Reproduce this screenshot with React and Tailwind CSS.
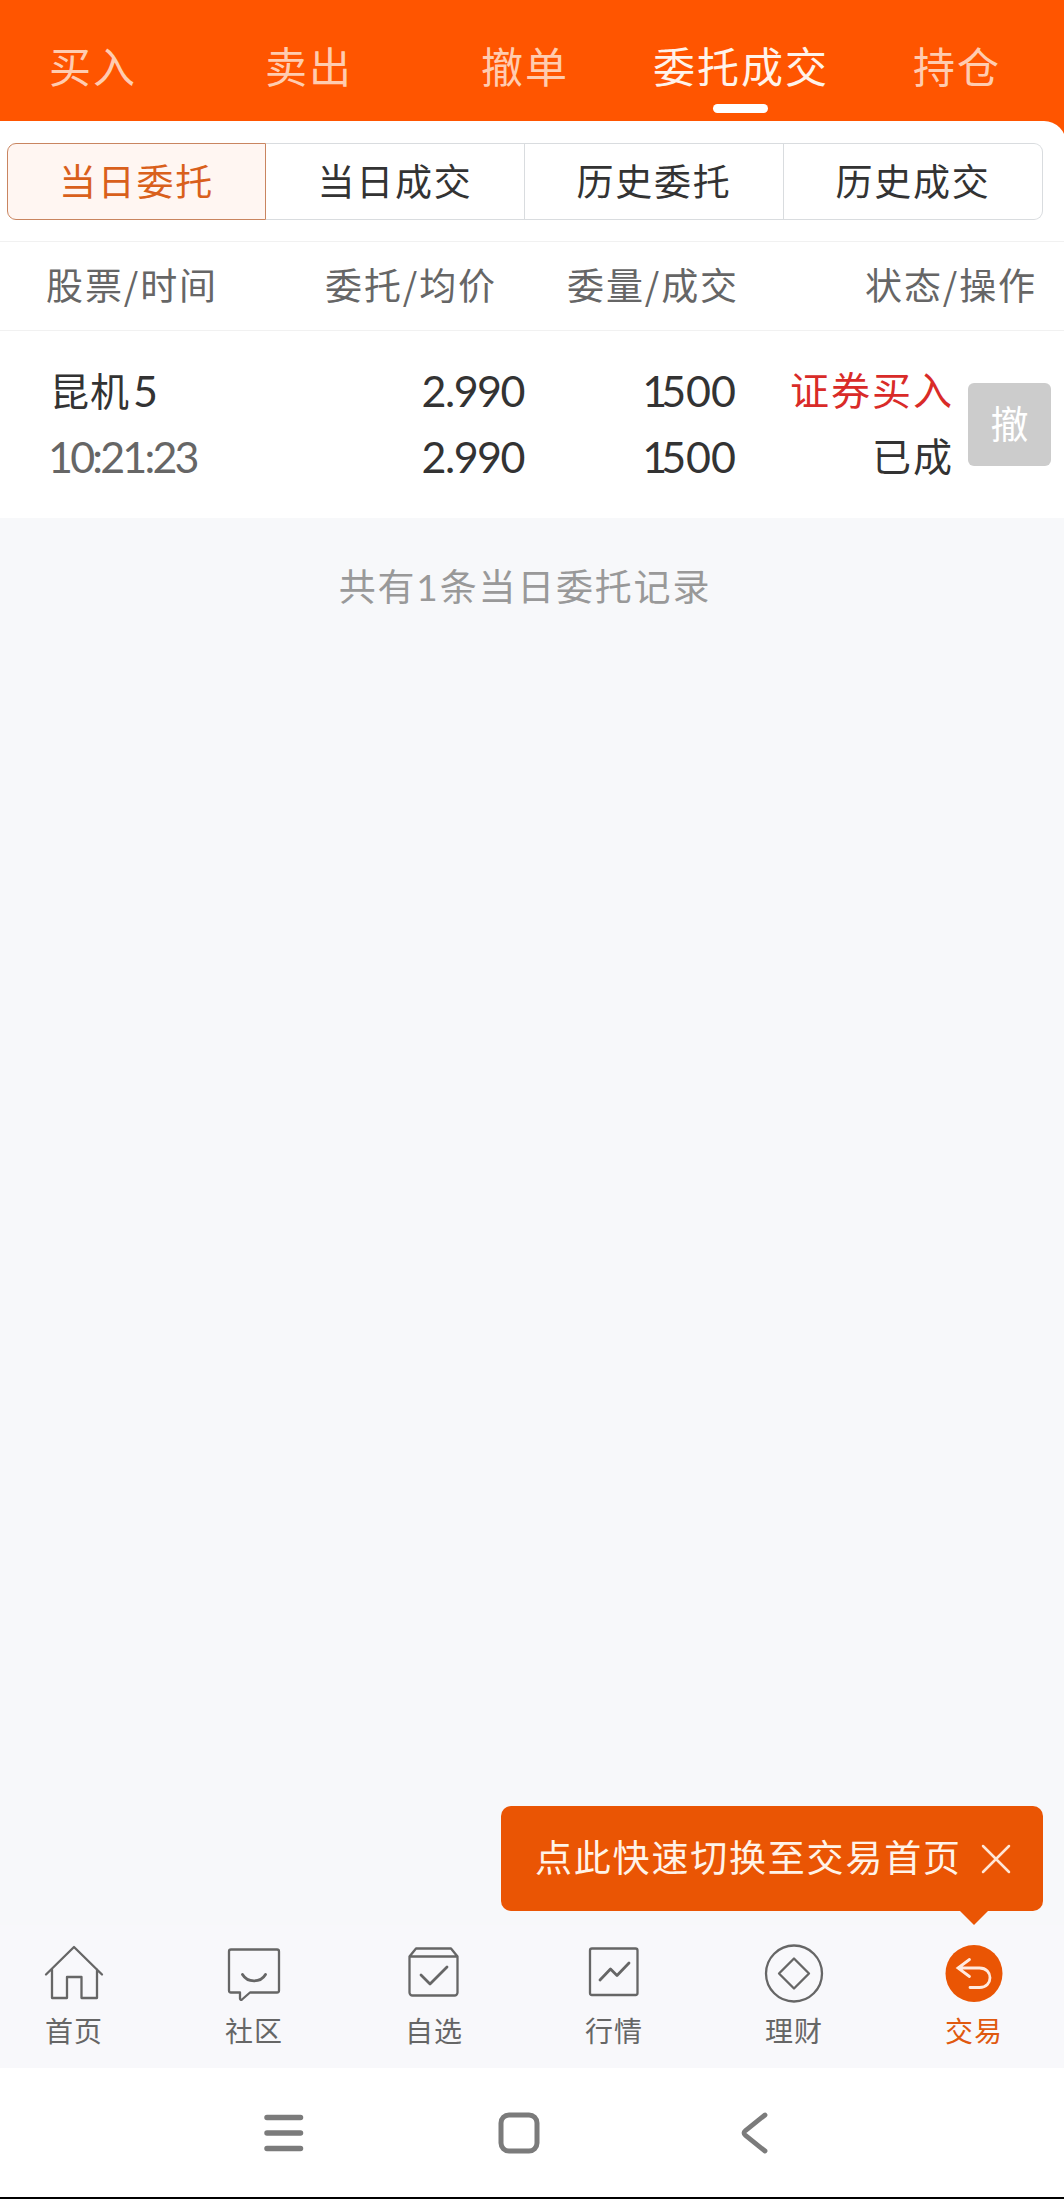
const CJK = "font-['Noto_Sans_CJK_SC',sans-serif]";
const NUM = "font-[Lato,'Noto_Sans_CJK_SC',sans-serif]";

const topTabs = ["买入", "卖出", "撤单", "委托成交", "持仓"];
const segments = ["当日委托", "当日成交", "历史委托", "历史成交"];

const iconProps = {
  width: 60,
  height: 60,
  viewBox: "0 0 60 60",
  fill: "none",
  stroke: "#666666",
  strokeWidth: 2.3,
  strokeLinecap: "round",
  strokeLinejoin: "round",
};

function HomeIcon() {
  return (
    <svg {...iconProps}>
      <path d="M2 30.500 30 3 58 30.500M8 25.500v28.500h15V33h14.500v21H53V25.500" />
    </svg>
  );
}
function CommunityIcon() {
  return (
    <svg {...iconProps}>
      <path d="M7 5.500h46a2 2 0 0 1 2 2v39a2 2 0 0 1-2 2H26l-8 7c-1 .7-2 0-2-1v-6H7a2 2 0 0 1-2-2v-39a2 2 0 0 1 2-2Z" />
      <path d="M18.500 30.500c5 8.500 18 8.500 23 0" strokeWidth="2.800" />
    </svg>
  );
}
function WatchlistIcon() {
  return (
    <svg {...iconProps}>
      <path d="M5.500 12.500 12 4.500h35l6.500 8v36a3 3 0 0 1-3 3h-42a3 3 0 0 1-3-3ZM6 12.500h47" />
      <path d="m17 31 9 9 17-17" strokeWidth="2.800" />
    </svg>
  );
}
function MarketIcon() {
  return (
    <svg {...iconProps}>
      <rect x="6" y="4.500" width="47.500" height="46.500" rx="2" />
      <path d="m16 36 10.500-11 6.500 6.500 12-12.500" strokeWidth="2.800" />
    </svg>
  );
}
function WealthIcon() {
  return (
    <svg {...iconProps}>
      <circle cx="30" cy="29.500" r="28" />
      <path d="M30 14.500 45 29.500 30 44.500 15 29.500Z" />
    </svg>
  );
}
function TradeIcon() {
  return (
    <svg {...iconProps} stroke="#ffeadf" strokeWidth="2.800">
      <circle cx="30" cy="29.500" r="28.500" fill="#ea5504" stroke="none" />
      <path d="M25.500 15.500 14 24l11.500 8.500M14 24h21.500c14 0 14 19.500 0 19.500H26" strokeLinejoin="miter" />
    </svg>
  );
}

const navItems = [
  { label: "首页", Icon: HomeIcon },
  { label: "社区", Icon: CommunityIcon },
  { label: "自选", Icon: WatchlistIcon },
  { label: "行情", Icon: MarketIcon },
  { label: "理财", Icon: WealthIcon },
  { label: "交易", Icon: TradeIcon, active: true },
];

export default function App() {
  return (
    <div className={`flex h-[2199px] w-[1064px] flex-col overflow-hidden bg-[#f7f8fa] text-[#333333] ${CJK}`}>
      <header className="bg-[#ff5500]">
        <nav className="-ml-4 flex h-[121px] w-[1080px]">
          {topTabs.map((t) => {
            const active = t === "委托成交";
            return (
              <div key={t} className="flex w-[216px] flex-col items-center pt-[35px]">
                <span
                  className={`-mr-0.5 text-[42px] leading-[60px] tracking-[2px] whitespace-nowrap ${active ? "text-[#fff3ea]" : "text-[#ffccb0]"}`}
                >
                  {t}
                </span>
                {active && <span className="mt-[9px] h-[9px] w-[55px] rounded-full bg-white" />}
              </div>
            );
          })}
        </nav>
        <div className="-mr-0.5 -ml-5 h-[22px] rounded-t-[22px] bg-white" />
      </header>

      <section className="h-[98px] shrink-0 bg-white pl-[7px]">
        <div className="flex h-[77px] w-[1036px]">
          {segments.map((s, i) => (
            <div
              key={s}
              className={`flex w-[259px] items-center justify-center border pb-[4px] text-[37px] tracking-[1.700px] ${
                i === 0
                  ? "rounded-l-[9px] border-[#c98560] bg-[#fff6f2] text-[#d9601c]"
                  : i === 3
                    ? "rounded-r-[9px] border-l-0 border-[#d9dcdf]"
                    : "border-l-0 border-[#d9dcdf]"
              }`}
            >
              <span className="leading-[54px]">{s}</span>
            </div>
          ))}
        </div>
      </section>

      <section className="flex h-[90px] shrink-0 items-center border-y border-[#f1f1f1] bg-white pr-[29px] pb-[2px] pl-[46px] text-[37px] tracking-[1.900px] text-[#666666]">
        <span className="w-[279px]">股票/时间</span>
        <span className="w-[242px]">委托/均价</span>
        <span>委量/成交</span>
        <span className="-mr-0.5 ml-auto">状态/操作</span>
      </section>

      <section className="flex h-[187px] shrink-0 bg-white pt-[27px] pr-[13px] pl-[48px] text-[39px] leading-[66px]">
        <div className="w-[222px]">
          <div className="flex h-[66px] items-center pl-[2px]">
            <span className="-mt-[4px] tracking-[1px]">昆机</span>
            <span className={`ml-[3px] text-[43px] ${NUM}`}>5</span>
          </div>
          <div className={`h-[66px] text-[43px] tracking-[-2.800px] text-[#666666] ${NUM}`}>10:21:23</div>
        </div>
        <div className={`-mr-px w-[254px] text-right text-[43px] tracking-[-1.500px] ${NUM}`}>
          <div className="h-[66px]">2.990</div>
          <div className="h-[66px]">2.990</div>
        </div>
        <div className={`w-[213px] text-right text-[43px] ${NUM}`}>
          <div className="h-[66px]"><span className="tracking-[-6px]">1</span>500</div>
          <div className="h-[66px]"><span className="tracking-[-6px]">1</span>500</div>
        </div>
        <div className="-mt-[3px] w-[218px] text-right tracking-[2px]">
          <div className="h-[66px] text-[#d92b28]">证券买入</div>
          <div className="h-[66px]">已成</div>
        </div>
        <button className="mt-[25px] ml-auto flex size-[83px] items-center justify-center rounded-[6px] bg-[#cccccc] pb-[5px] text-[38px] text-white">
          撤
        </button>
      </section>

      <p className="mt-[40px] -ml-[14px] text-center text-[37px] leading-[54px] tracking-[1.800px] text-[#999999]">
        共有<span className={NUM}>1</span>条当日委托记录
      </p>

      <div className="mt-auto mr-[21px] flex flex-col items-end">
        <div className="flex h-[105px] w-[542px] items-center rounded-[10px] bg-[#ea5504] pl-[34px] text-[37px] text-[#fff3e8]">
          <span className="-mt-[3px] tracking-[1.800px]">点此快速切换至交易首页</span>
          <svg className="ml-[19px]" width="30" height="30" viewBox="0 0 30 30" stroke="#ffe6d6" strokeWidth="2.500" strokeLinecap="round">
            <path d="M2 2 28 28M28 2 2 28" />
          </svg>
        </div>
        <svg className="mr-[55px]" width="28" height="14" viewBox="0 0 28 14">
          <path d="M0 0h28L14 14Z" fill="#ea5504" />
        </svg>
      </div>

      <nav className="-ml-4 flex h-[143px] w-[1080px] shrink-0 bg-[#f8f8fb] pt-[19px]">
        {navItems.map(({ label, Icon, active }) => (
          <div key={label} className="flex w-[180px] flex-col items-center">
            <Icon />
            <span className={`mt-[5px] text-[28px] leading-[42px] tracking-[1px] ${active ? "text-[#e0590f]" : "text-[#666666]"}`}>
              {label}
            </span>
          </div>
        ))}
      </nav>

      <footer className="h-[131px] shrink-0 border-b-2 border-black bg-white pt-[42px]">
        <div className="flex pl-[261px]">
          <svg width="46" height="46" viewBox="0 0 46 46" stroke="#7b7b7b" strokeWidth="5.500" strokeLinecap="round">
            <path d="M6 7.500h33.500M6 23h33.500M6 38.500h33.500" />
          </svg>
          <svg className="ml-[189px]" width="46" height="46" viewBox="0 0 46 46" fill="none" stroke="#7b7b7b" strokeWidth="5">
            <rect x="5" y="5" width="36" height="36" rx="8" />
          </svg>
          <svg className="ml-[190px]" width="46" height="46" viewBox="0 0 46 46" fill="none" stroke="#7b7b7b" strokeWidth="4.800" strokeLinecap="round">
            <path d="M33 5 13.500 20.500c-2 1.700-2 3.300 0 5L33 41" />
          </svg>
        </div>
      </footer>
    </div>
  );
}
